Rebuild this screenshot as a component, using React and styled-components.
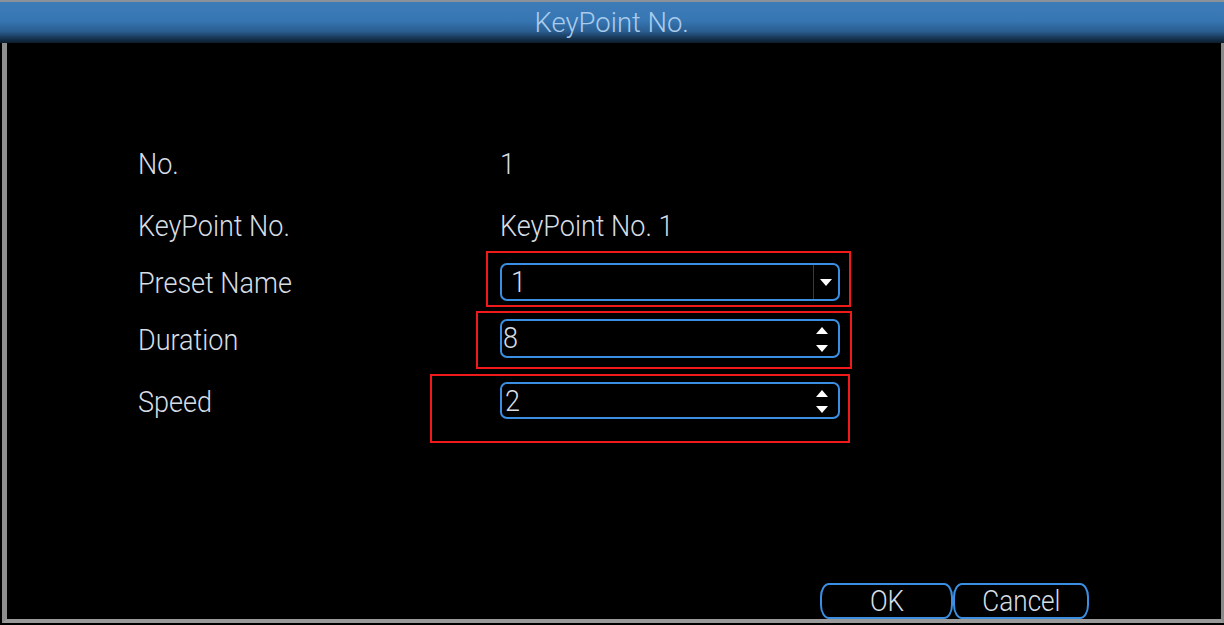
import React from "react";
import styled, { createGlobalStyle } from "styled-components";

const Global = createGlobalStyle`
  html, body { margin: 0; padding: 0; background: #000; }
  body { width: 1224px; height: 625px; overflow: hidden; }
`;

const Screen = styled.div`
  position: relative;
  width: 1224px;
  height: 625px;
  display: flex;
  flex-direction: column;
  background: #000;
  font-family: Roboto, "Liberation Sans", sans-serif;
  font-weight: 300;
  color: #d6dde5;
`;

const TitleBar = styled.header`
  height: 43px;
  flex: none;
  border-top: 2px solid #8d9299;
  box-sizing: border-box;
  background: linear-gradient(to bottom, #3e7cb8 0%, #3676b3 45%, #2a5d8f 72%, #15314d 90%, #0c1c2c 100%);
  display: flex;
  align-items: center;
  justify-content: center;
`;

const Cond = styled.span`
  display: inline-block;
  transform: scaleX(${(p) => p.$sx || 0.9});
  transform-origin: ${(p) => (p.$center ? "center" : "left")} center;
  white-space: nowrap;
`;

const Title = styled.h1`
  margin: 0;
  font-size: 28px;
  font-weight: 300;
  color: #a9cbec;
  line-height: 1;
  padding-top: 1px;
`;

const Body = styled.main`
  flex: 1;
  margin-left: 2px;
  border-left: 5px solid #8e8e8e;
  border-right: 3px solid #8a8a8a;
  border-bottom: 4px solid #9a9a9a;
  margin-bottom: 2px;
  display: flex;
  flex-direction: column;
  padding: 90px 0 0 131px;
`;

const Form = styled.div`
  display: grid;
  grid-template-columns: 362px 340px;
  grid-template-rows: 62px 62px 52px 62px 62px;
  align-items: center;
`;

const Label = styled.div`
  font-size: 30px;
  line-height: 1;
`;

const Value = styled.div`
  font-size: 30px;
  line-height: 1;
`;

const Field = styled.div`
  height: ${(p) => p.$h}px;
  box-sizing: border-box;
  border: 2px solid #3a8fe3;
  border-radius: 7px;
  display: flex;
  align-items: center;
  margin-top: ${(p) => p.$mt || 0}px;
`;

const FieldText = styled.div`
  flex: 1;
  font-size: 30px;
  line-height: 1;
  padding-left: ${(p) => p.$pl}px;
`;

const DropBtn = styled.div`
  width: 24px;
  align-self: stretch;
  border-left: 1px solid #1c3e70;
  display: flex;
  align-items: center;
  justify-content: center;
`;

const Spin = styled.div`
  width: 32px;
  align-self: stretch;
  display: flex;
  flex-direction: column;
  align-items: center;
  justify-content: space-between;
  padding: 6px 0 4px;
  box-sizing: border-box;
`;

const Footer = styled.div`
  margin-top: auto;
  display: flex;
  justify-content: flex-end;
  padding-right: 132px;
`;

const Button = styled.button`
  width: ${(p) => p.$w}px;
  height: 36px;
  background: #000;
  border: 2px solid #3a8fe3;
  border-radius: 9px / 14px;
  color: #d6dde5;
  font-family: inherit;
  font-weight: 300;
  font-size: 29px;
  line-height: 1;
  padding: 0;
  display: flex;
  align-items: center;
  justify-content: center;
`;

const Mark = styled.div`
  position: absolute;
  left: ${(p) => p.$x}px;
  top: ${(p) => p.$y}px;
  width: ${(p) => p.$w}px;
  height: ${(p) => p.$h}px;
  border: 2px solid #f01a1a;
  box-sizing: border-box;
  pointer-events: none;
`;

const Down = () => (
  <svg width="12" height="7" viewBox="0 0 12 7">
    <polygon points="0,0 12,0 6,7" fill="#ffffff" />
  </svg>
);

const Up = () => (
  <svg width="12" height="7" viewBox="0 0 12 7">
    <polygon points="0,7 12,7 6,0" fill="#ffffff" />
  </svg>
);

export default function App() {
  return (
    <Screen>
      <Global />
      <TitleBar>
        <Title>
          <Cond $center $sx={0.98}>KeyPoint No.</Cond>
        </Title>
      </TitleBar>
      <Body>
        <Form>
          <Label><Cond>No.</Cond></Label>
          <Value><Cond>1</Cond></Value>

          <Label><Cond>KeyPoint No.</Cond></Label>
          <Value><Cond>KeyPoint No. 1</Cond></Value>

          <Label><Cond>Preset Name</Cond></Label>
          <Field $h={38} $mt={-2}>
            <FieldText $pl={9}><Cond>1</Cond></FieldText>
            <DropBtn><Down /></DropBtn>
          </Field>

          <Label><Cond>Duration</Cond></Label>
          <Field $h={39} $mt={-4}>
            <FieldText $pl={1}><Cond>8</Cond></FieldText>
            <Spin><Up /><Down /></Spin>
          </Field>

          <Label><Cond>Speed</Cond></Label>
          <Field $h={37} $mt={-3}>
            <FieldText $pl={3}><Cond>2</Cond></FieldText>
            <Spin><Up /><Down /></Spin>
          </Field>
        </Form>
        <Footer>
          <Button $w={133}><Cond $center>OK</Cond></Button>
          <Button $w={136}><Cond $center>Cancel</Cond></Button>
        </Footer>
      </Body>
      <Mark $x={486} $y={251} $w={365} $h={56} />
      <Mark $x={476} $y={311} $w={376} $h={58} />
      <Mark $x={430} $y={374} $w={420} $h={69} />
    </Screen>
  );
}
